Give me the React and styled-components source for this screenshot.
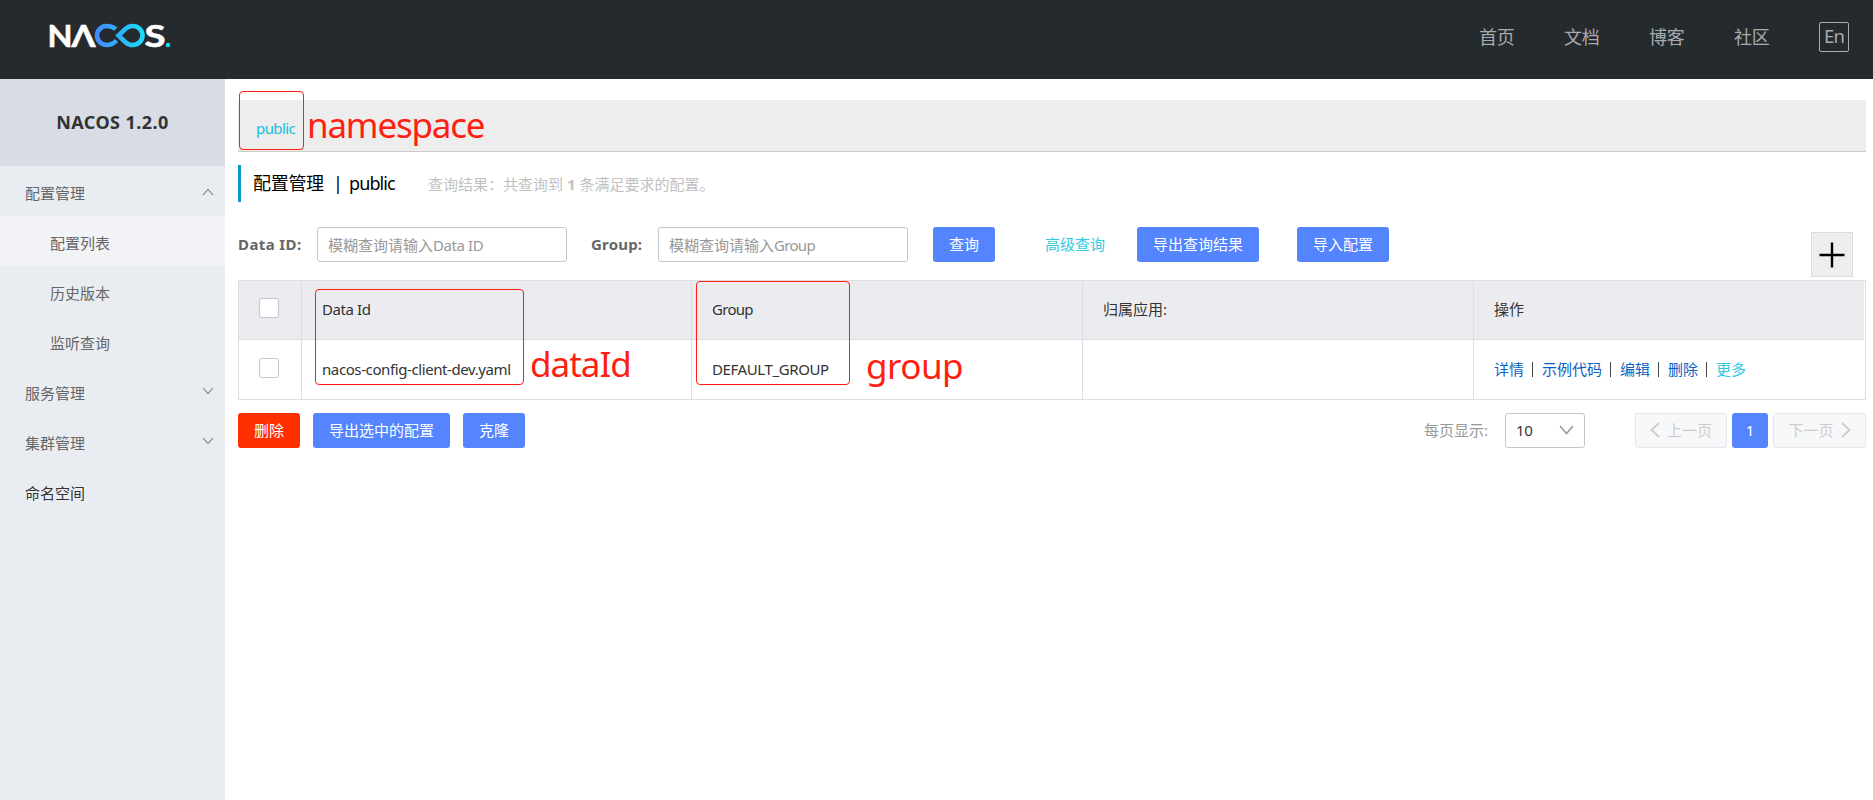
import React from "react";
import styled, { createGlobalStyle, css } from "styled-components";

const GlobalStyle = createGlobalStyle`
  * { box-sizing: border-box; }
  body {
    margin: 0;
    background: #fff;
    font-family: "Noto Sans", "Noto Sans CJK SC", sans-serif;
    font-size: 15px;
    line-height: 20px;
    color: #333;
  }
  button, input { font: inherit; }
`;

const Page = styled.div`
  position: relative;
  height: 800px;
  display: flex;
  flex-direction: column;
  overflow: hidden;
  white-space: nowrap;
`;

const Latin = styled.span`
  letter-spacing: ${(p) => p.$track ?? -0.4}px;
`;

const Header = styled.header`
  flex: none;
  height: 79px;
  background: #252a2f;
  display: flex;
  justify-content: space-between;
  align-items: flex-start;
  padding: 12px 24px 0 46px;
`;

const Logo = styled.svg`
  display: block;
`;

const Nav = styled.nav`
  display: flex;
  align-items: center;
  height: 30px;
  margin-top: 10px;
  color: #a9abad;
`;

const NavItem = styled.a`
  width: 36px;
  margin-right: 49px;
  padding-bottom: 0;
  font-size: 18px;
  letter-spacing: -0.3px;
`;

const LangButton = styled.button`
  width: 30px;
  height: 30px;
  padding: 0 0 2px;
  border: 1px solid #a9abad;
  border-radius: 2px;
  background: none;
  color: #a9abad;
  font-size: 18.5px;
  letter-spacing: -0.8px;
  line-height: 26px;
`;

const Body = styled.div`
  flex: 1;
  display: flex;
`;

const Sidebar = styled.aside`
  flex: none;
  width: 225px;
  background: #e9edf2;
`;

const Product = styled.div`
  height: 87px;
  background: #d8dde5;
  color: #333;
  font-size: 18px;
  font-weight: 700;
  letter-spacing: 0.45px;
  text-align: center;
  line-height: 87px;
`;

const MenuItem = styled.div`
  height: 50px;
  padding: 3px 11px 0 ${(p) => (p.$sub ? 50 : 25)}px;
  display: flex;
  align-items: center;
  justify-content: space-between;
  background: ${(p) => (p.$active ? "#f1f3f7" : "transparent")};
  color: ${(p) => (p.$dark ? "#333" : "#666")};
`;

const Chevron = styled.svg`
  display: block;
  fill: none;
  stroke: ${(p) => p.$color || "#777"};
  stroke-width: ${(p) => p.$weight || 1.1};
  margin-top: ${(p) => p.$shift || 0}px;
`;

const Main = styled.main`
  flex: 1;
  min-width: 0;
  padding: 21px 7px 0 13px;
`;

const NamespaceBar = styled.div`
  height: 52px;
  padding: 18px 0 0 18px;
  background: #ededed;
  border-bottom: 1px solid #ccc;
  color: #16bfdc;
`;

const Title = styled.h1`
  margin: 13px 0 0;
  height: 37px;
  padding: 0 0 1px 12px;
  border-left: 3px solid #0a97cc;
  display: flex;
  align-items: center;
  color: #000;
  font-size: 18px;
  font-weight: 400;
`;

const TitleText = styled.span`
  width: ${(p) => p.$w}px;
  letter-spacing: ${(p) => p.$track || 0}px;
`;

const Summary = styled.span`
  color: #c1c1c1;
  font-size: 15px;
  padding-top: 2px;
`;

const Query = styled.div`
  margin-top: 25px;
  height: 53px;
  display: flex;
  align-items: flex-start;
`;

const Label = styled.label`
  width: ${(p) => p.$w}px;
  font-weight: 700;
  color: #666;
  line-height: 35px;
`;

const Field = styled.div`
  width: 250px;
  height: 35px;
  margin-right: ${(p) => p.$gap}px;
  padding: 1px 10px 0;
  border: 1px solid #c4c6cf;
  border-radius: 3px;
  color: #999;
  line-height: 33px;
`;

const Button = styled.button`
  flex: none;
  width: ${(p) => p.$w}px;
  height: 35px;
  margin: 0 ${(p) => p.$gap || 0}px 0 0;
  padding: 0 0 1px;
  border: 0;
  border-radius: 3px;
  background: ${(p) => (p.$danger ? "#ff3000" : "#5584ff")};
  color: #fff;
`;

const Advanced = styled.a`
  width: 92px;
  color: #33c9e2;
  line-height: 34px;
`;

const AddButton = styled.button`
  width: 42px;
  height: 45px;
  margin: 5px 13px 0 auto;
  padding: 0;
  border: 1px solid #dcdcdc;
  background: #eee;
  display: flex;
  align-items: center;
  justify-content: center;
`;

const Table = styled.div`
  border: 1px solid #dcdee3;
  display: grid;
  grid-template-columns: 63px 390px 391px 391px 1fr;
  grid-template-rows: 59px 59px;
`;

const Cell = styled.div`
  display: flex;
  align-items: center;
  padding: ${(p) => (p.$check ? "0 0 4px 20px" : "0 0 2px 20px")};
  border-right: ${(p) => (p.$last ? "0" : "1px solid #dcdee3")};
  ${(p) =>
    p.$head &&
    css`
      background: #ebecf0;
      border-bottom: 1px solid #dcdee3;
    `}
  ${(p) =>
    p.$last &&
    p.$head &&
    css`
      margin-right: 1px;
    `}
`;

const Checkbox = styled.span`
  width: 20px;
  height: 20px;
  border: 1px solid #c4c6cf;
  border-radius: 3px;
  background: #fff;
`;

const Action = styled.a`
  color: ${(p) => (p.$light ? "#33c9e2" : "#0a62c4")};
`;

const Divider = styled.span`
  width: 1px;
  height: 15px;
  margin: 2px 9px 0 8px;
  background: #444;
`;

const Footer = styled.div`
  margin-top: 13px;
  display: flex;
  align-items: center;
`;

const PageSizeLabel = styled.span`
  margin-left: auto;
  width: 81px;
  padding-bottom: 2px;
  color: #999;
`;

const Select = styled.div`
  width: 80px;
  height: 35px;
  margin-right: 50px;
  padding: 0 10px 1px 10px;
  border: 1px solid #c4c6cf;
  border-radius: 3px;
  display: flex;
  align-items: center;
  justify-content: space-between;
`;

const PageButton = styled.button`
  width: ${(p) => p.$w}px;
  height: 35px;
  margin-right: ${(p) => p.$gap || 0}px;
  padding: 0 0 1px;
  border: ${(p) => (p.$current ? "0" : "1px solid #e6e7eb")};
  border-radius: 3px;
  background: ${(p) => (p.$current ? "#5584ff" : "#f7f8fa")};
  color: ${(p) => (p.$current ? "#fff" : "#ccc")};
  display: flex;
  align-items: center;
  justify-content: center;
  gap: 7px;
`;

/* Red call-outs float above the page. */
const Frame = styled.div`
  position: absolute;
  left: ${(p) => p.$x}px;
  top: ${(p) => p.$y}px;
  width: ${(p) => p.$w}px;
  height: ${(p) => p.$h}px;
  border: 1px solid #ff1e10;
  border-radius: 4px;
`;

const Note = styled.div`
  position: absolute;
  left: ${(p) => p.$x}px;
  top: ${(p) => p.$y}px;
  color: #ff1e10;
  font-size: 35px;
  line-height: 48px;
  letter-spacing: ${(p) => p.$track || 0}px;
`;

function NacosLogo() {
  return (
    <Logo width="136" height="50" viewBox="0 -8 136 50">
      <defs>
        <linearGradient id="loop" gradientUnits="userSpaceOnUse" x1="49" y1="0" x2="99" y2="0">
          <stop offset="0" stopColor="#4488ff" />
          <stop offset="1" stopColor="#18e0f5" />
        </linearGradient>
      </defs>
      <g fill="#fff" stroke="#fff" strokeWidth="0.600" fontFamily="Lato" fontWeight="700" fontSize="31">
        <text x="1.500" y="26.700" textLength="25" lengthAdjust="spacingAndGlyphs">N</text>
        <text x="25.500" y="26.700" textLength="24" lengthAdjust="spacingAndGlyphs">Λ</text>
        <text x="98.500" y="26.700" textLength="21" lengthAdjust="spacingAndGlyphs">S</text>
      </g>
      <path
        d="M69.800 9.200C67.500 7 64.500 6 60.500 6A9.500 9.500 0 0 0 60.500 25C64.500 25 67.500 23.800 70.500 20.500M72.500 15.500L79.500 8.800C82 6.500 84.500 6 87 6A9.500 9.500 0 0 1 87 25C84.500 25 82 24.500 79.500 22.200Z"
        fill="none"
        stroke="url(#loop)"
        strokeWidth="4.600"
      />
      <circle cx="122" cy="25" r="2.200" fill="#18e0f5" />
    </Logo>
  );
}

const MENU = [
  { text: "配置管理", arrow: "up" },
  { text: "配置列表", sub: true, active: true },
  { text: "历史版本", sub: true },
  { text: "监听查询", sub: true },
  { text: "服务管理", arrow: "down" },
  { text: "集群管理", arrow: "down" },
  { text: "命名空间", dark: true },
];

const ACTIONS = ["详情", "示例代码", "编辑", "删除", "更多"];

export default function App() {
  return (
    <Page>
      <GlobalStyle />
      <Header>
        <NacosLogo />
        <Nav>
          {["首页", "文档", "博客", "社区"].map((t) => (
            <NavItem key={t}>{t}</NavItem>
          ))}
          <LangButton>En</LangButton>
        </Nav>
      </Header>
      <Body>
        <Sidebar>
          <Product>NACOS 1.2.0</Product>
          {MENU.map((m) => (
            <MenuItem key={m.text} $sub={m.sub} $active={m.active} $dark={m.dark}>
              {m.text}
              {m.arrow && (
                <Chevron width="12" height="8" viewBox="0 0 12 8" $shift={m.arrow === "up" ? -2 : -3}>
                  <path d={m.arrow === "up" ? "M1 7L6 1.500L11 7" : "M1 1L6 6.500L11 1"} />
                </Chevron>
              )}
            </MenuItem>
          ))}
        </Sidebar>
        <Main>
          <NamespaceBar>
            <Latin $track={-0.6}>public</Latin>
          </NamespaceBar>
          <Title>
            <TitleText $w={80} $track={-0.3}>配置管理</TitleText>
            <TitleText $w={16}>|</TitleText>
            <TitleText $w={79} $track={-0.9}>public</TitleText>
            <Summary>
              查询结果：共查询到 <b>1</b> 条满足要求的配置。
            </Summary>
          </Title>
          <Query>
            <Label $w={79}>
              <Latin $track={0.4}>Data ID:</Latin>
            </Label>
            <Field $gap={24}>
              模糊查询请输入<Latin>Data ID</Latin>
            </Field>
            <Label $w={67}>
              <Latin $track={0.2}>Group:</Latin>
            </Label>
            <Field $gap={25}>
              模糊查询请输入<Latin $track={-0.7}>Group</Latin>
            </Field>
            <Button $w={62} $gap={50}>查询</Button>
            <Advanced>高级查询</Advanced>
            <Button $w={122} $gap={38}>导出查询结果</Button>
            <Button $w={92}>导入配置</Button>
            <AddButton>
              <svg width="26" height="26" viewBox="0 0 26 26" stroke="#000" strokeWidth="2.400">
                <path d="M0.500 13H25.500M13 0.500V25.500" />
              </svg>
            </AddButton>
          </Query>
          <Table>
            <Cell $head $check><Checkbox /></Cell>
            <Cell $head><Latin>Data Id</Latin></Cell>
            <Cell $head><Latin $track={-0.7}>Group</Latin></Cell>
            <Cell $head>归属应用:</Cell>
            <Cell $head $last>操作</Cell>
            <Cell $check><Checkbox /></Cell>
            <Cell><Latin>nacos-config-client-dev.yaml</Latin></Cell>
            <Cell><Latin>DEFAULT_GROUP</Latin></Cell>
            <Cell />
            <Cell $last>
              {ACTIONS.map((a, i) => (
                <React.Fragment key={a}>
                  {i > 0 && <Divider />}
                  <Action $light={i === 4}>{a}</Action>
                </React.Fragment>
              ))}
            </Cell>
          </Table>
          <Footer>
            <Button $danger $w={62} $gap={13}>删除</Button>
            <Button $w={137} $gap={13}>导出选中的配置</Button>
            <Button $w={62}>克隆</Button>
            <PageSizeLabel>每页显示:</PageSizeLabel>
            <Select>
              <Latin>10</Latin>
              <Chevron width="15" height="10" viewBox="0 0 15 10" $color="#999" $weight={1.500}>
                <path d="M1 1L7.500 8.500L14 1" />
              </Chevron>
            </Select>
            <PageButton $w={92} $gap={5}>
              <Chevron width="10" height="16" viewBox="0 0 10 16" $color="#ccc" $weight={1.800}>
                <path d="M9 1L1.500 8L9 15" />
              </Chevron>
              上一页
            </PageButton>
            <PageButton $w={36} $gap={5} $current>1</PageButton>
            <PageButton $w={93}>
              下一页
              <Chevron width="10" height="16" viewBox="0 0 10 16" $color="#ccc" $weight={1.800}>
                <path d="M1 1L8.500 8L1 15" />
              </Chevron>
            </PageButton>
          </Footer>
        </Main>
      </Body>
      <Frame $x={239} $y={91} $w={65} $h={59} />
      <Frame $x={315} $y={289} $w={209} $h={96} />
      <Frame $x={696} $y={281} $w={154} $h={104} />
      <Note $x={307} $y={101} $track={-1.2}>namespace</Note>
      <Note $x={530} $y={340} $track={-1}>dataId</Note>
      <Note $x={866} $y={342} $track={-0.5}>group</Note>
    </Page>
  );
}
